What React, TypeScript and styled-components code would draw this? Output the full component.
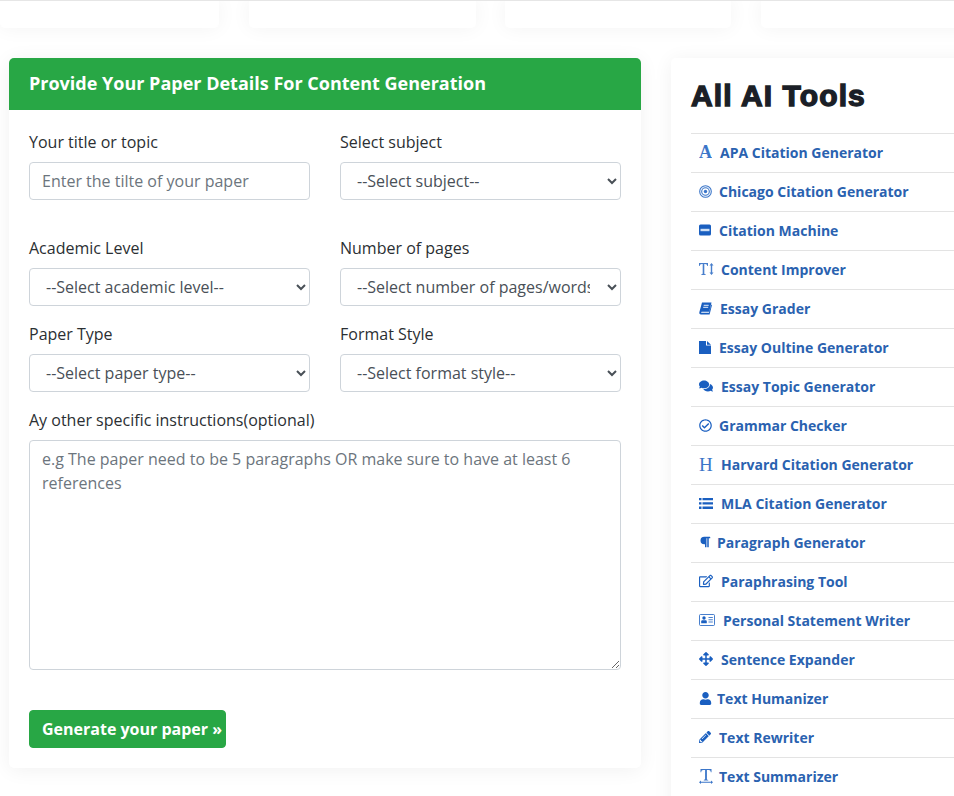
import React from "react";
import styled, { createGlobalStyle } from "styled-components";
import {
  FaComments, FaRegCheckCircle, FaParagraph, FaRegEdit, FaArrowsAlt, FaUser, FaPencilAlt,
} from "react-icons/fa";

const Global = createGlobalStyle`
  html, body { margin: 0; padding: 0; background: #fff; height: 100%; overflow: hidden; }
  body { font-family: "Open Sans", "Liberation Sans", sans-serif; color: #212529; }
  * { box-sizing: border-box; }
`;

const Page = styled.div`
  width: 954px;
  height: 796px;
  overflow: hidden;
  border-top: 1px solid #e6e6e6;
`;
const CardStrip = styled.div`
  display: grid;
  grid-template-columns: 219px 227px 226px 240px;
  column-gap: 29.67px;
  height: 27px;
  margin-bottom: 30px;
`;
const StubCard = styled.div`
  background: #fff;
  border-radius: 0 0 5px 5px;
  box-shadow: 0 0 20px rgba(0, 0, 0, 0.05);
  height: 27px;
`;
const Columns = styled.div`
  display: flex;
  align-items: flex-start;
  padding-left: 9px;
  gap: 30px;
`;
const FormCard = styled.section`
  width: 632px;
  flex: none;
  background: #fff;
  border-radius: 5px;
  box-shadow: 0 2px 20px rgba(0, 0, 0, 0.06);
  overflow: hidden;
`;
const FormHeader = styled.h2`
  margin: 0;
  height: 52px;
  background: #28a745;
  color: #fff;
  font-size: 18px;
  font-weight: 700;
  line-height: 50px;
  padding-left: 20px;
`;
const FormBody = styled.form`
  padding: 20px 20px 20px;
`;
const Row = styled.div<{ $gap: number }>`
  display: grid;
  grid-template-columns: 281px 281px;
  column-gap: 30px;
  margin-bottom: ${(p) => p.$gap}px;
`;
const Field = styled.div`
  display: flex;
  flex-direction: column;
`;
const Label = styled.label`
  font-size: 16px;
  line-height: 24px;
  margin-bottom: 8px;
  color: #2b2f33;
`;
const TextInput = styled.input`
  height: 38px;
  border: 1px solid #ced4da;
  border-radius: 4px;
  padding: 6px 12px;
  font: 400 16px/24px "Open Sans", sans-serif;
  color: #495057;
  background: #fff;
  &::placeholder { color: #6c757d; opacity: 1; }
`;
const Select = styled.select`
  height: 38px;
  width: 100%;
  border: 1px solid #ced4da;
  border-radius: 4px;
  padding: 6px 14px 6px 12px;
  font: 400 16px/24px "Open Sans", sans-serif;
  color: #495057;
  background: #fff;
`;
const TextArea = styled.textarea`
  display: block;
  width: 592px;
  height: 230px;
  border: 1px solid #ced4da;
  border-radius: 4px;
  padding: 6px 12px;
  font: 400 16px/24px "Open Sans", sans-serif;
  color: #495057;
  background: #fff;
  &::placeholder { color: #6c757d; opacity: 1; }
`;
const SubmitButton = styled.button`
  display: block;
  margin-top: 40px;
  height: 38px;
  width: 197px;
  border: 1px solid #28a745;
  border-radius: 4px;
  background: #28a745;
  color: #fff;
  font: 700 16px/24px "Open Sans", sans-serif;
  padding: 0 0 0 12px;
  text-align: left;
  white-space: nowrap;
`;
const ToolsCard = styled.aside`
  flex: none;
  width: 320px;
  height: 760px;
  background: #fff;
  border-radius: 5px;
  box-shadow: 0 2px 20px rgba(0, 0, 0, 0.06);
  padding: 20px 20px 0;
`;
const ToolsTitle = styled.h2`
  margin: 0 0 19px;
  font-family: "Liberation Sans", Arial, sans-serif;
  font-size: 30px;
  font-weight: 700;
  line-height: 36px;
  letter-spacing: 1.1px;
  color: #1b1f27;
  -webkit-text-stroke: 1.4px #1b1f27;
`;
const ToolList = styled.ul`
  list-style: none;
  margin: 0;
  padding: 0;
`;
const ToolItem = styled.li`
  height: 39px;
  border-top: 1px solid #e3e3e3;
  display: flex;
  align-items: center;
  padding: 0 0 2px 8px;
`;
const ToolLink = styled.a`
  display: flex;
  align-items: center;
  color: #2a62b0;
  font-size: 14px;
  font-weight: 700;
  text-decoration: none;
  white-space: nowrap;
`;
const IconSlot = styled.span<{ $w: number }>`
  display: inline-flex;
  align-items: center;
  flex: none;
  width: ${(p) => p.$w}px;
  color: #1a5fc0;
  font-size: 13px;
`;
const SerifGlyph = styled.span<{ $size: number; $w: number }>`
  font-family: "Liberation Serif", serif;
  font-weight: ${(p) => p.$w};
  font-size: ${(p) => p.$size}px;
  line-height: 1;
  opacity: 0.85;
`;

const TextHeightIcon = () => (
  <svg width="15" height="14" viewBox="0 0 15 14" fill="currentColor" opacity="0.8">
    <path d="M0 1h9v3H8.300C8.100 2.600 7.700 1.900 6 1.900H5.300v9.300c0 .7.400.9 1.400 1V13H2.300v-.8c1-.1 1.400-.3 1.400-1V1.900H3C1.300 1.900.9 2.600.7 4H0z" />
    <path d="M12.500 1l2 2.500h-1.300v7h1.300l-2 2.500-2-2.500h1.300v-7h-1.300z" />
  </svg>
);
const TextWidthIcon = () => (
  <svg width="14" height="15" viewBox="0 0 14 15" fill="currentColor" opacity="0.85">
    <path d="M1.500 0h11v3.200h-.7c-.2-1.300-.6-2.200-2-2.200H7.900v9c0 .6.300.8 1.300.9v.6H4.800v-.6c1-.1 1.300-.3 1.300-.9V1H4.200c-1.400 0-1.800.9-2 2.200h-.7z" />
    <path d="M0 13.200l2-1.700v1.200h10v-1.200l2 1.700-2 1.700v-1.200H2v1.200z" />
  </svg>
);
const BullseyeIcon = () => (
  <svg width="13" height="13" viewBox="0 0 13 13" fill="none" stroke="currentColor" opacity="0.85">
    <circle cx="6.500" cy="6.500" r="5.800" strokeWidth="1.100" />
    <circle cx="6.500" cy="6.500" r="3.800" strokeWidth="1.100" />
    <circle cx="6.500" cy="6.500" r="1.700" fill="currentColor" stroke="none" />
  </svg>
);
const BannerIcon = () => (
  <svg width="12" height="12" viewBox="0 0 12 12" fill="currentColor">
    <rect y="0.500" width="12" height="11" rx="1.500" />
    <rect x="1.500" y="4.800" width="9" height="2.400" fill="#cfe0f5" />
  </svg>
);
const SlantBookIcon = () => (
  <svg width="13" height="13" viewBox="0 0 13 13" fill="currentColor">
    <path d="M3 .5h9.500L10.200 9.800H2.800c-.8 0-1 .9-.2 1H10l2.300-8.300.7.500-2.400 9.500H2C.6 12.500 0 11.300.4 10z" />
    <path d="M4.700 3.300h5M4.200 5.300h5" stroke="#fff" strokeWidth="0.900" fill="none" />
  </svg>
);
const FileIcon = () => (
  <svg width="12" height="13" viewBox="0 0 12 13" fill="currentColor">
    <path d="M0 0h7v4.600h5V13H0zM8 0l4 3.700H8z" />
  </svg>
);
const SquareListIcon = () => (
  <svg width="14" height="11" viewBox="0 0 14 11" fill="currentColor">
    <path d="M0 0h2.500v2.300H0zM3.500 0H14v2.300H3.500zM0 4.300h2.500v2.300H0zM3.500 4.300H14v2.300H3.500zM0 8.600h2.500v2.300H0zM3.500 8.600H14v2.300H3.500z" />
  </svg>
);
const IdCardIcon = () => (
  <svg width="16" height="12" viewBox="0 0 16 12" fill="currentColor">
    <rect x="0.500" y="0.500" width="15" height="11" rx="1" fill="none" stroke="currentColor" opacity="0.8" />
    <circle cx="5" cy="4" r="1.700" />
    <path d="M2.200 9.300V7.500c0-.8.600-1.300 1.300-1.300h3c.7 0 1.300.5 1.300 1.300v1.800z" />
    <path d="M9.500 3h4.300v1H9.500zM9.500 5.300h4.300v1H9.500zM9.500 7.600h4.300v1H9.500z" opacity="0.8" />
  </svg>
);

const tools: [React.ReactNode, number, string][] = [
  [<SerifGlyph $size={18} $w={700}>A</SerifGlyph>, 21, "APA Citation Generator"],
  [<BullseyeIcon />, 20, "Chicago Citation Generator"],
  [<BannerIcon />, 20, "Citation Machine"],
  [<TextHeightIcon />, 22, "Content Improver"],
  [<SlantBookIcon />, 21, "Essay Grader"],
  [<FileIcon />, 20, "Essay Oultine Generator"],
  [<FaComments size={14} />, 22, "Essay Topic Generator"],
  [<FaRegCheckCircle size={13} />, 20, "Grammar Checker"],
  [<SerifGlyph $size={19} $w={400}>H</SerifGlyph>, 22, "Harvard Citation Generator"],
  [<SquareListIcon />, 22, "MLA Citation Generator"],
  [<FaParagraph size={12} />, 18, "Paragraph Generator"],
  [<FaRegEdit size={14} />, 22, "Paraphrasing Tool"],
  [<IdCardIcon />, 24, "Personal Statement Writer"],
  [<FaArrowsAlt size={14} />, 22, "Sentence Expander"],
  [<FaUser size={13} />, 18, "Text Humanizer"],
  [<FaPencilAlt size={12} />, 20, "Text Rewriter"],
  [<TextWidthIcon />, 20, "Text Summarizer"],
];

export default function App() {
  return (
    <Page>
      <Global />
      <CardStrip>
        <StubCard />
        <StubCard />
        <StubCard />
        <StubCard />
      </CardStrip>
      <Columns>
        <FormCard>
          <FormHeader>Provide Your Paper Details For Content Generation</FormHeader>
          <FormBody>
            <Row $gap={36}>
              <Field>
                <Label>Your title or topic</Label>
                <TextInput placeholder="Enter the tilte of your paper" />
              </Field>
              <Field>
                <Label>Select subject</Label>
                <Select defaultValue=""><option value="">--Select subject--</option></Select>
              </Field>
            </Row>
            <Row $gap={16}>
              <Field>
                <Label>Academic Level</Label>
                <Select defaultValue=""><option value="">--Select academic level--</option></Select>
              </Field>
              <Field>
                <Label>Number of pages</Label>
                <Select defaultValue=""><option value="">--Select number of pages/words--</option></Select>
              </Field>
            </Row>
            <Row $gap={16}>
              <Field>
                <Label>Paper Type</Label>
                <Select defaultValue=""><option value="">--Select paper type--</option></Select>
              </Field>
              <Field>
                <Label>Format Style</Label>
                <Select defaultValue=""><option value="">--Select format style--</option></Select>
              </Field>
            </Row>
            <Field>
              <Label>Ay other specific instructions(optional)</Label>
              <TextArea placeholder="e.g The paper need to be 5 paragraphs OR make sure to have at least 6 references" />
            </Field>
            <SubmitButton type="button">Generate your paper »</SubmitButton>
          </FormBody>
        </FormCard>
        <ToolsCard>
          <ToolsTitle>All AI Tools</ToolsTitle>
          <ToolList>
            {tools.map(([icon, w, name]) => (
              <ToolItem key={name}>
                <ToolLink href="#">
                  <IconSlot $w={w}>{icon}</IconSlot>
                  {name}
                </ToolLink>
              </ToolItem>
            ))}
          </ToolList>
        </ToolsCard>
      </Columns>
    </Page>
  );
}
